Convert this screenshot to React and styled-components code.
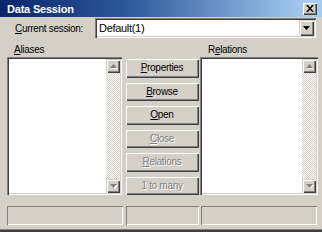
import React from "react";
import styled, { createGlobalStyle } from "styled-components";

const Global = createGlobalStyle`
  html, body { margin: 0; padding: 0; background: #d4d0c8; }
  body { font-family: "Liberation Sans", Arial, sans-serif; font-size: 10px; letter-spacing: -0.3px; color: #000; }
  * { box-sizing: border-box; }
`;

const Window = styled.div`
  width: 322px;
  height: 232px;
  background: #d4d0c8;
  display: flex;
  flex-direction: column;
  box-shadow: inset 0 -1px #404040, inset 0 -2px #404040, inset 0 -3px #808080;
  overflow: hidden;
`;

const TitleBar = styled.div`
  height: 17px;
  display: flex;
  align-items: center;
  justify-content: space-between;
  padding: 0 5px 0 7px;
  background: linear-gradient(to right, #0a246a 0%, #2d5a9a 40%, #a6caf0 95%);
`;

const TitleText = styled.span`
  font-family: "Liberation Sans", Arial, sans-serif;
  font-weight: bold;
  font-size: 11px;
  letter-spacing: -0.2px;
  color: #fff;
`;

const CaptionButton = styled.div`
  width: 14px;
  height: 12px;
  background: #d4d0c8;
  box-shadow: inset 1px 1px #fff, inset -1px -1px #404040, inset -2px -2px #808080;
  display: flex;
  align-items: center;
  justify-content: center;
`;

const Body = styled.div`
  display: flex;
  flex-direction: column;
  padding: 0 4px 0 7px;
`;

const SessionRow = styled.div`
  display: flex;
  align-items: center;
  height: 20px;
  margin-top: 1px;
`;

const Label = styled.span`
  display: inline-block;
  padding-left: ${(p) => p.$indent || 0}px;
  width: ${(p) => (p.$width ? `${p.$width}px` : "auto")};
  white-space: nowrap;
`;

const Sunken = styled.div`
  background: #fff;
  box-shadow: inset 1px 1px #808080, inset 2px 2px #404040, inset -1px -1px #fff,
    inset -2px -2px #d4d0c8;
  padding: 2px;
`;

const Combo = styled(Sunken)`
  width: 221px;
  height: 20px;
  display: flex;
  align-items: center;
  justify-content: space-between;
  padding: 2px 2px 2px 4px;
  font-size: 11px;
`;

const Raised = styled.div`
  background: #d4d0c8;
  box-shadow: inset 1px 1px #d4d0c8, inset 2px 2px #fff, inset -1px -1px #404040,
    inset -2px -2px #808080;
  display: flex;
  align-items: center;
  justify-content: center;
`;

const ComboButton = styled(Raised)`
  width: 15px;
  height: 16px;
`;

const LabelsRow = styled.div`
  display: flex;
  height: 19px;
  align-items: flex-end;
  padding-bottom: 2px;
`;

const MainRow = styled.div`
  display: flex;
  height: 138px;
`;

const ListBox = styled(Sunken)`
  width: ${(p) => p.$width}px;
  height: 100%;
  display: flex;
  justify-content: flex-end;
`;

const ScrollBar = styled.div`
  width: 14px;
  height: 100%;
  display: flex;
  flex-direction: column;
  justify-content: space-between;
  background: repeating-conic-gradient(#d4d0c8 0 25%, #fff 0 50%) 0 0 / 2px 2px;
`;

const ArrowButton = styled(Raised)`
  width: 14px;
  height: 14px;
`;

const ButtonColumn = styled.div`
  width: 74px;
  margin: 0 1px 0 3px;
  padding-top: 1px;
  display: flex;
  flex-direction: column;
  gap: 4px;
`;

const PushButton = styled(Raised)`
  height: 20px;
  color: ${(p) => (p.$disabled ? "#808080" : "#000")};
  text-shadow: ${(p) => (p.$disabled ? "1px 1px #fff" : "none")};
  white-space: nowrap;
`;

const StatusRow = styled.div`
  display: flex;
  margin-top: 11px;
  height: 19px;
`;

const StatusPanel = styled.div`
  width: ${(p) => p.$width}px;
  margin-right: ${(p) => p.$gap || 0}px;
  height: 100%;
  box-shadow: inset 1px 1px #808080, inset -1px -1px #fff;
`;

const Arrow = ({ dir = "down", color = "#000", shadow }) => (
  <svg width="7" height="5" viewBox="0 0 7 5" style={{ overflow: "visible" }}>
    {shadow && (
      <polygon points={dir === "down" ? "1,1 8,1 4.5,5" : "1,5 8,5 4.5,1"} fill="#fff" />
    )}
    <polygon points={dir === "down" ? "0,0 7,0 3.5,4" : "0,4 7,4 3.5,0"} fill={color} />
  </svg>
);

const Scroller = () => (
  <ScrollBar>
    <ArrowButton>
      <Arrow dir="up" color="#808080" shadow />
    </ArrowButton>
    <ArrowButton>
      <Arrow dir="down" color="#808080" shadow />
    </ArrowButton>
  </ScrollBar>
);

const buttons = [
  { key: "P", rest: "roperties" },
  { key: "B", rest: "rowse" },
  { key: "O", rest: "pen" },
  { key: "C", rest: "lose", disabled: true },
  { key: "R", rest: "elations", disabled: true },
  { key: "", rest: "1 to many", disabled: true },
];

export default function App() {
  return (
    <>
      <Global />
      <Window>
        <TitleBar>
          <TitleText>Data Session</TitleText>
          <CaptionButton>
            <svg width="8" height="7" viewBox="0 0 8 7">
              <path d="M0 0h2l2 2.5L6 0h2L5 3.5 8 7H6L4 4.5 2 7H0l3-3.5z" fill="#000" />
            </svg>
          </CaptionButton>
        </TitleBar>
        <Body>
          <SessionRow>
            <Label $indent={8} $width={88}>
              <u>C</u>urrent session:
            </Label>
            <Combo>
              <span>Default(1)</span>
              <ComboButton>
                <Arrow dir="down" />
              </ComboButton>
            </Combo>
          </SessionRow>
          <LabelsRow>
            <Label $indent={7} $width={194}>
              <u>A</u>liases
            </Label>
            <Label $indent={7}>
              R<u>e</u>lations
            </Label>
          </LabelsRow>
          <MainRow>
            <ListBox $width={116}>
              <Scroller />
            </ListBox>
            <ButtonColumn>
              {buttons.map((b) => (
                <PushButton key={b.rest} $disabled={b.disabled}>
                  {b.key && <u>{b.key}</u>}
                  {b.rest}
                </PushButton>
              ))}
            </ButtonColumn>
            <ListBox $width={119}>
              <Scroller />
            </ListBox>
          </MainRow>
          <StatusRow>
            <StatusPanel $width={116} $gap={3} />
            <StatusPanel $width={73} $gap={2} />
            <StatusPanel $width={116} />
          </StatusRow>
        </Body>
      </Window>
    </>
  );
}
